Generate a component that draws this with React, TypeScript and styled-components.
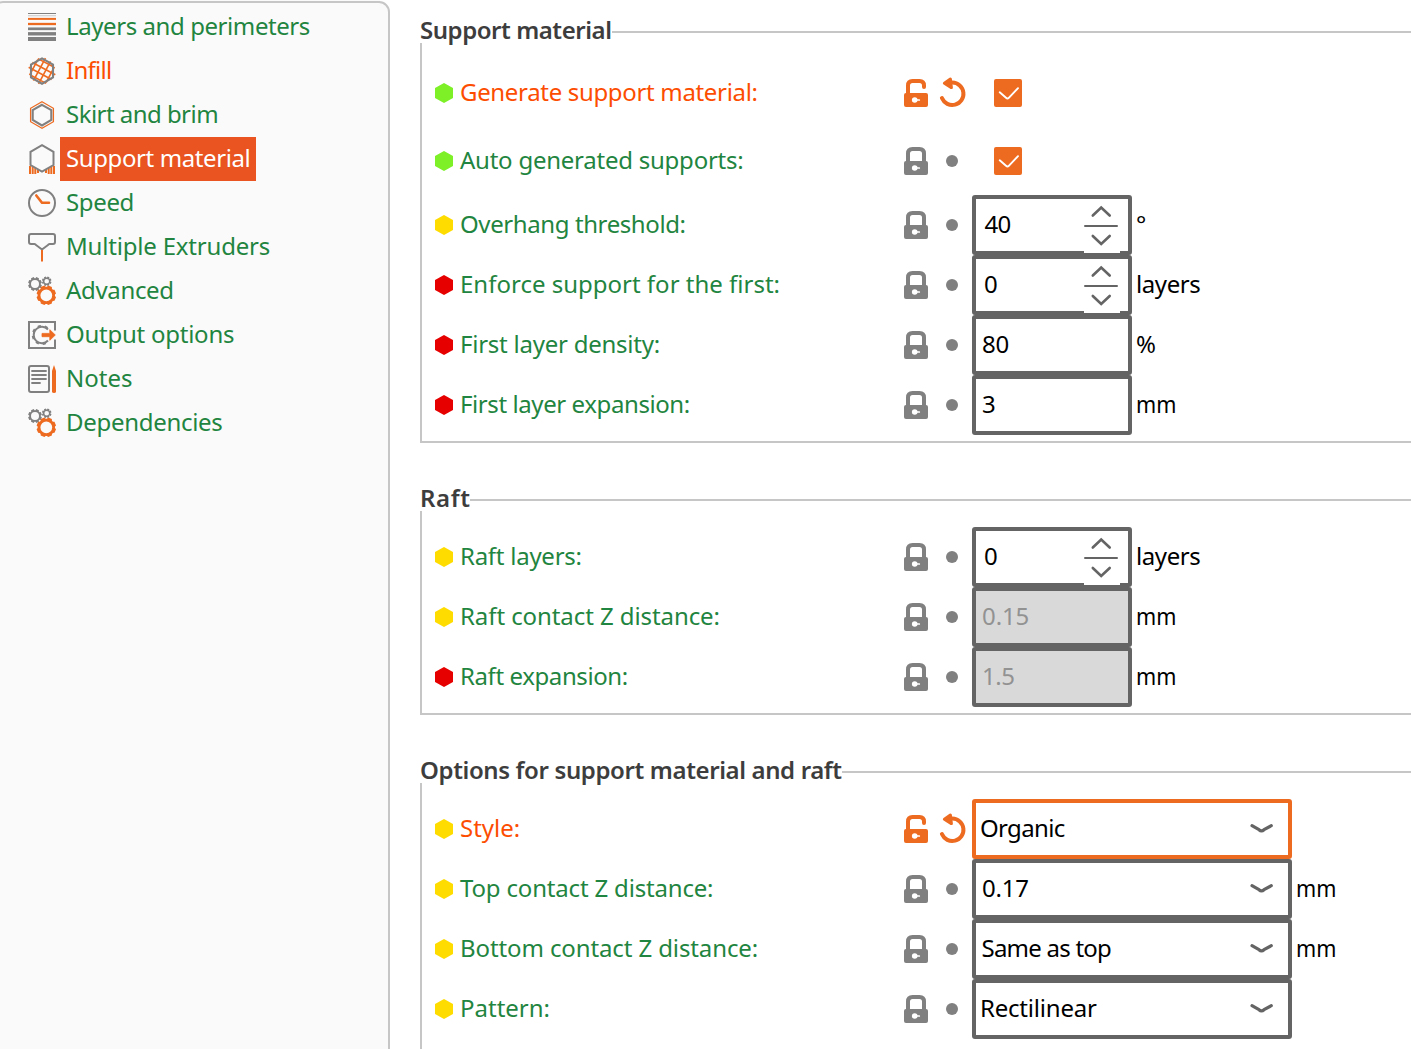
import React from "react";
import styled, { createGlobalStyle } from "styled-components";

const color = {
  text: "#1f8540",
  modified: "#fc4d01",
  accent: "#ed6b21",
  selected: "#e95420",
  icon: "#808080",
  control: "#646464",
  line: "#c6c6c6",
  heading: "#3d3d3d",
};

const level = { simple: "#7df028", advanced: "#ffdc00", expert: "#e70000" };
type Level = keyof typeof level;

const GlobalStyle = createGlobalStyle`
  * { box-sizing: border-box; }
  body {
    margin: 0;
    background: #fff;
    color: #000;
    font-family: "Noto Sans", "Open Sans", sans-serif;
    font-size: 24px;
    font-weight: 400;
  }
  svg { display: block; flex: none; overflow: visible; }
`;

const Page = styled.div`
  display: flex;
  height: 1049px;
  overflow: hidden;
`;

/* ---------- page tree ---------- */

const SidebarArea = styled.div`
  flex: none;
  width: 390px;
  padding-top: 1px;
  background: linear-gradient(#fafafa, #fafafa) 0 0 / 380px 20px no-repeat;
`;

const Sidebar = styled.nav`
  width: 398px;
  height: 1080px;
  margin-left: -8px;
  padding: 2px 0 0 34px;
  background: #fafafa;
  border: 2px solid ${color.line};
  border-radius: 11px;
`;

const TreeItem = styled.div`
  display: flex;
  align-items: center;
  height: 44px;
  gap: 4px;
`;

const TreeLabel = styled.span<{ $track: number; $state?: "selected" | "modified" }>`
  height: 44px;
  padding: 0 6px;
  line-height: 41px;
  white-space: nowrap;
  letter-spacing: ${(p) => p.$track}px;
  color: ${(p) => (p.$state === "selected" ? "#fff" : p.$state === "modified" ? color.modified : color.text)};
  background: ${(p) => (p.$state === "selected" ? color.selected : "transparent")};
  ${(p) => p.$state === "selected" && "width: 196px;"}
`;

/* ---------- option groups ---------- */

const Main = styled.main`
  flex: 1;
  min-width: 0;
  padding: 21px 0 0 30px;
`;

const GroupBody = styled.div`
  padding: 16px 0 6px 13px;
  border: solid ${color.line};
  border-width: 0 0 2px 2px;
`;

const Group = styled.section`
  margin-bottom: 46px;

  &:last-child ${GroupBody} {
    padding-bottom: 60px;
  }
`;

const GroupHeader = styled.header<{ $titleWidth: number }>`
  display: grid;
  grid-template: 22px / ${(p) => p.$titleWidth}px 1fr;
  align-items: center;
`;

const GroupTitle = styled.h2<{ $track: number }>`
  height: 22px;
  margin: 0;
  font-size: 24px;
  font-weight: 600;
  line-height: 17px;
  white-space: nowrap;
  letter-spacing: ${(p) => p.$track}px;
  color: ${color.heading};
`;

const Rule = styled.div`
  height: 2px;
  background: ${color.line};
`;

const OptionRow = styled.div<{ $tall?: boolean }>`
  display: grid;
  grid-template-columns: 25px 444px 36px 32px auto 1fr;
  align-items: center;
  height: ${(p) => (p.$tall ? 68 : 60)}px;
`;

const OptionLabel = styled.label<{ $track: number; $modified?: boolean }>`
  padding-bottom: 3px;
  line-height: 32px;
  white-space: nowrap;
  letter-spacing: ${(p) => p.$track}px;
  color: ${(p) => (p.$modified ? color.modified : color.text)};
`;

const Field = styled.div<{ $wide?: boolean; $focus?: boolean; $disabled?: boolean }>`
  display: flex;
  align-items: center;
  justify-content: space-between;
  width: ${(p) => (p.$wide ? 320 : 160)}px;
  height: 60px;
  border: 4px solid ${(p) => (p.$focus ? color.accent : color.control)};
  border-radius: 3px;
  background: ${(p) => (p.$disabled ? "#d9d9d9" : "#fff")};
  color: ${(p) => (p.$disabled ? "#929292" : "#000")};
`;

const Value = styled.span<{ $track: number; $inset: number }>`
  padding: 0 0 3px ${(p) => p.$inset}px;
  line-height: 32px;
  white-space: nowrap;
  letter-spacing: ${(p) => p.$track}px;
`;

const Spinner = styled.div`
  align-self: flex-start;
  width: 36px;
  height: 54px;
  margin-right: 8px;
  background: #fff;
`;

const DropArrow = styled.div`
  margin-right: 14px;
`;

const Check = styled.div`
  display: grid;
  place-items: center;
  width: 28px;
  height: 28px;
  margin-left: 22px;
  border-radius: 2px;
  background: ${color.accent};
`;

const Unit = styled.span<{ $track: number; $narrow?: boolean }>`
  padding: 0 0 3px 4px;
  line-height: 32px;
  letter-spacing: ${(p) => p.$track}px;
  ${(p) => p.$narrow && "transform: scaleX(0.9); transform-origin: 4px 50%;"}
`;

/* ---------- icons ---------- */

const g = { fill: "none", stroke: color.icon, strokeWidth: 2 } as const;
const o = { fill: "none", stroke: color.accent, strokeWidth: 2 } as const;

const Icon = ({ children }: { children: React.ReactNode }) => (
  <svg width="28" height="28" viewBox="0 0 28 28">{children}</svg>
);

const gearPath = (cx: number, cy: number, outer: number, inner: number, teeth: number) => {
  const pts: string[] = [];
  for (let i = 0; i < teeth; i++) {
    const step = (Math.PI * 2) / teeth;
    [[-0.26, outer], [0.26, outer], [0.4, inner], [0.6, inner]].forEach(([f, r]) => {
      const a = (i + 0.5 + f) * step;
      pts.push(`${(cx + r * Math.cos(a)).toFixed(2)} ${(cy + r * Math.sin(a)).toFixed(2)}`);
    });
  }
  return `M${pts.join("L")}Z`;
};

const Cog = ({ x, y, r, hole, fill }: { x: number; y: number; r: number; hole: number; fill: string }) => (
  <path
    fill={fill}
    fillRule="evenodd"
    d={`${gearPath(x, y, r, r - 1.2, 8)}M${x - hole} ${y}a${hole} ${hole} 0 1 0 ${hole * 2} 0a${hole} ${hole} 0 1 0 ${-hole * 2} 0Z`}
  />
);

const LayersIcon = () => (
  <Icon>
    <path d="M0 .5H28" stroke={color.icon} />
    <path d="M0 2.7H28" stroke="#d0d0d0" strokeWidth="1.2" />
    <path d="M0 5.9H28" stroke={color.accent} strokeWidth="2" />
    <path d="M0 11H28" stroke={color.accent} strokeWidth="2.3" />
    <path d="M0 15.8H28" stroke={color.icon} strokeWidth="2.7" />
    <path d="M0 20.8H28" stroke={color.icon} strokeWidth="3.4" />
    <path d="M0 26H28" stroke={color.icon} strokeWidth="4" />
  </Icon>
);

const InfillIcon = () => (
  <Icon>
    <g transform="translate(14 14) rotate(28)">
      <path {...o} strokeWidth="1.6" d="M-9.500 -9H8M-12.500 -3H13.500M-13.500 3H12.500M-8 9H9.500M-9 -8V9.500M-3 -13V12.500M3 -12.500V13M9 -9.500V8" />
    </g>
    <path {...g} strokeWidth="2.100" d="M14 1.400L25 7.600V20.400L14 26.700L3 20.400V7.600Z" />
  </Icon>
);

const SkirtIcon = () => (
  <Icon>
    <path {...o} strokeWidth="1.3" d="M14 .8L25.400 7.300V20.700L14 27.200L2.600 20.700V7.300Z" />
    <path {...g} strokeWidth="2.100" d="M14 3.800L23.300 9V19L14 24.500L4.700 19V9Z" />
  </Icon>
);

const SupportIcon = () => (
  <Icon>
    <path {...o} strokeWidth="2" d="M2 21V29M4.700 21V29M7.300 22V29M10 24.500V28M18 24.500V28M20.700 22V29M23.300 21V29M26 21V29" />
    <path fill="#fafafa" stroke={color.icon} strokeWidth="2" d="M14 .2L25.500 6.800V20L14 26.500L2.500 20V6.800Z" />
  </Icon>
);

const SpeedIcon = () => (
  <Icon>
    <circle {...g} cx="14" cy="14" r="13" />
    <path {...o} strokeWidth="2.600" strokeLinecap="round" strokeLinejoin="round" d="M8.300 6.500L14 13.800H21" />
  </Icon>
);

const ExtruderIcon = () => (
  <Icon>
    <path {...g} strokeLinejoin="round" d="M3 1H25Q27 1 27 3V9Q27 11 25 11H21.500Q20.500 11 20 12L14 16.500L8 12Q7.500 11 6.500 11H3Q1 11 1 9V3Q1 1 3 1Z" />
    <path {...o} d="M14 17V28.500" />
  </Icon>
);

const GearsIcon = () => (
  <Icon>
    <Cog x={7} y={7} r={7} hole={4} fill={color.icon} />
    <Cog x={18.7} y={4.2} r={4.9} hole={2.3} fill={color.icon} />
    <Cog x={18.3} y={18.3} r={9.9} hole={5.9} fill={color.accent} />
  </Icon>
);

const OutputIcon = () => (
  <Icon>
    <path {...g} d="M27 9.500V1H1V27H27V18.500" />
    <path {...g} d="M20 8.500A8.200 8.200 0 1 0 20 19.500" />
    <path {...g} strokeWidth="2.200" strokeDasharray="3.200 3.800" d="M19.500 7A9 9 0 1 0 19.500 21" />
    <path fill={color.accent} stroke={color.accent} strokeWidth=".8" strokeLinejoin="round" d="M14 12.400H21.800V8.700L27.300 14L21.800 19.300V15.700H14Z" />
  </Icon>
);

const NotesIcon = () => (
  <Icon>
    <rect {...g} x="1" y="1" width="20" height="26" rx="2" />
    <path {...g} strokeWidth="1.800" strokeLinecap="round" d="M4 6H18M4 10H18M4 14H18M4 18H12" />
    <path fill={color.accent} d="M26 0L28 6V26.500Q28 28 26 28Q24 28 24 26.500V6Z" />
  </Icon>
);

const LevelMark = ({ value }: { value: Level }) => (
  <svg width="18" height="20" viewBox="0 0 18 20">
    <path fill={level[value]} d="M9 0L18 5V15L9 20L0 15V5Z" />
  </svg>
);

const LockIcon = ({ open }: { open?: boolean }) => {
  const c = open ? color.accent : color.icon;
  return (
    <svg width="24" height="28" viewBox="0 0 24 28">
      <path
        fill="none"
        stroke={c}
        strokeWidth="4"
        strokeLinecap={open ? "round" : "butt"}
        d={open ? "M4 15V6.500Q4 2 8.500 2H15.500Q20 2 20 6.500V8" : "M4 15V6.500Q4 2 8.500 2H15.500Q20 2 20 6.500V15"}
      />
      <rect y="14" width="24" height="14" rx="2" fill={c} />
      <circle cx="10.700" cy="21" r="2.800" fill="#fff" />
      <path d="M11 21H15.300" stroke="#fff" strokeWidth="1.700" strokeLinecap="round" />
    </svg>
  );
};

const RevertMark = ({ active }: { active?: boolean }) =>
  active ? (
    <svg width="26" height="32" viewBox="0.600 0.900 26 32">
      <path fill="none" stroke={color.accent} strokeWidth="4" strokeLinecap="round" d="M13 6.500A11.200 11.200 0 1 1 2.500 22" />
      <path fill={color.accent} stroke={color.accent} strokeWidth="3" strokeLinejoin="round" d="M5 7.200L11 3L12 11.500Z" />
    </svg>
  ) : (
    <svg width="24" height="12" viewBox="0 0 24 12">
      <circle cx="12" cy="6" r="6" fill={color.icon} />
    </svg>
  );

const SpinArrows = () => (
  <svg width="36" height="54" viewBox="0 0 36 54" fill="none" stroke={color.control} strokeLinecap="round">
    <path strokeWidth="2.600" d="M8.800 16.500L17.200 8.500L25.700 16.500M8.800 37L17.200 45L25.700 37" />
    <path strokeWidth="2" d="M1 27H33" />
  </svg>
);

const ChevronDown = () => (
  <svg width="24" height="12" viewBox="0 0 24 12">
    <path fill="none" stroke={color.control} strokeWidth="3.200" strokeLinecap="round" strokeLinejoin="round" d="M2 2.700L9 6.700Q11.500 8.900 14 6.700L21.300 2.700" />
  </svg>
);

const Tick = () => (
  <svg width="28" height="28" viewBox="0 0 28 28">
    <path fill="none" stroke="#fff" strokeWidth="1.900" strokeLinecap="round" strokeLinejoin="round" d="M5.700 13.300L12 18.800Q13.500 20.200 14.800 18.800L24 9.200" />
  </svg>
);

/* ---------- data ---------- */

type TreeEntry = { label: string; icon: React.FC; track: number; state?: "selected" | "modified" };

const tree: TreeEntry[] = [
  { label: "Layers and perimeters", icon: LayersIcon, track: -0.42 },
  { label: "Infill", icon: InfillIcon, track: -0.7, state: "modified" },
  { label: "Skirt and brim", icon: SkirtIcon, track: -0.54 },
  { label: "Support material", icon: SupportIcon, track: -0.4, state: "selected" },
  { label: "Speed", icon: SpeedIcon, track: -0.35 },
  { label: "Multiple Extruders", icon: ExtruderIcon, track: -0.19 },
  { label: "Advanced", icon: GearsIcon, track: -0.33 },
  { label: "Output options", icon: OutputIcon, track: -0.25 },
  { label: "Notes", icon: NotesIcon, track: 0 },
  { label: "Dependencies", icon: GearsIcon, track: -0.3 },
];

type Option = {
  label: string;
  track: number;
  level: Level;
  kind: "check" | "spin" | "text" | "select";
  modified?: boolean;
  disabled?: boolean;
  value?: string;
  valueTrack?: number;
  inset?: number;
  unit?: string;
};

type OptionGroup = { title: string; track: number; width: number; options: Option[] };

const groups: OptionGroup[] = [
  {
    title: "Support material",
    track: -0.45,
    width: 192,
    options: [
      { label: "Generate support material:", track: -0.33, level: "simple", kind: "check", modified: true },
      { label: "Auto generated supports:", track: -0.24, level: "simple", kind: "check" },
      { label: "Overhang threshold:", track: -0.4, level: "advanced", kind: "spin", value: "40", valueTrack: -0.7, inset: 8.5, unit: "°" },
      { label: "Enforce support for the first:", track: 0.0, level: "expert", kind: "spin", value: "0", inset: 8, unit: "layers" },
      { label: "First layer density:", track: -0.24, level: "expert", kind: "text", value: "80", valueTrack: -0.2, inset: 6, unit: "%" },
      { label: "First layer expansion:", track: -0.41, level: "expert", kind: "text", value: "3", inset: 6, unit: "mm" },
    ],
  },
  {
    title: "Raft",
    track: 0.6,
    width: 50,
    options: [
      { label: "Raft layers:", track: -0.26, level: "advanced", kind: "spin", value: "0", inset: 8, unit: "layers" },
      { label: "Raft contact Z distance:", track: -0.08, level: "advanced", kind: "text", value: "0.15", valueTrack: -0.1, inset: 6, unit: "mm", disabled: true },
      { label: "Raft expansion:", track: -0.4, level: "expert", kind: "text", value: "1.5", valueTrack: -0.4, inset: 6, unit: "mm", disabled: true },
    ],
  },
  {
    title: "Options for support material and raft",
    track: -0.38,
    width: 422,
    options: [
      { label: "Style:", track: 0, level: "advanced", kind: "select", value: "Organic", valueTrack: -0.66, inset: 4, modified: true },
      { label: "Top contact Z distance:", track: -0.18, level: "advanced", kind: "select", value: "0.17", valueTrack: -0.2, inset: 6, unit: "mm" },
      { label: "Bottom contact Z distance:", track: -0.11, level: "advanced", kind: "select", value: "Same as top", valueTrack: -0.77, inset: 5.5, unit: "mm" },
      { label: "Pattern:", track: 0, level: "advanced", kind: "select", value: "Rectilinear", valueTrack: -0.21, inset: 4 },
    ],
  },
];

const OptionControl = ({ option }: { option: Option }) => {
  if (option.kind === "check") return <Check><Tick /></Check>;
  return (
    <Field $wide={option.kind === "select"} $focus={option.modified} $disabled={option.disabled}>
      <Value $track={option.valueTrack ?? 0} $inset={option.inset ?? 6}>{option.value}</Value>
      {option.kind === "spin" && <Spinner><SpinArrows /></Spinner>}
      {option.kind === "select" && <DropArrow><ChevronDown /></DropArrow>}
    </Field>
  );
};

export default function App() {
  return (
    <Page>
      <GlobalStyle />
      <SidebarArea>
        <Sidebar>
          {tree.map(({ label, icon: ItemIcon, track, state }) => (
            <TreeItem key={label}>
              <ItemIcon />
              <TreeLabel $track={track} $state={state}>{label}</TreeLabel>
            </TreeItem>
          ))}
        </Sidebar>
      </SidebarArea>
      <Main>
        {groups.map((group) => (
          <Group key={group.title}>
            <GroupHeader $titleWidth={group.width}>
              <GroupTitle $track={group.track}>{group.title}</GroupTitle>
              <Rule />
            </GroupHeader>
            <GroupBody>
              {group.options.map((option) => (
                <OptionRow key={option.label} $tall={option.kind === "check"}>
                  <LevelMark value={option.level} />
                  <OptionLabel $track={option.track} $modified={option.modified}>{option.label}</OptionLabel>
                  <LockIcon open={option.modified} />
                  <RevertMark active={option.modified} />
                  <OptionControl option={option} />
                  {option.unit && (
                    <Unit $track={option.unit === "layers" ? -0.41 : 0} $narrow={option.unit === "mm"}>{option.unit}</Unit>
                  )}
                </OptionRow>
              ))}
            </GroupBody>
          </Group>
        ))}
      </Main>
    </Page>
  );
}
